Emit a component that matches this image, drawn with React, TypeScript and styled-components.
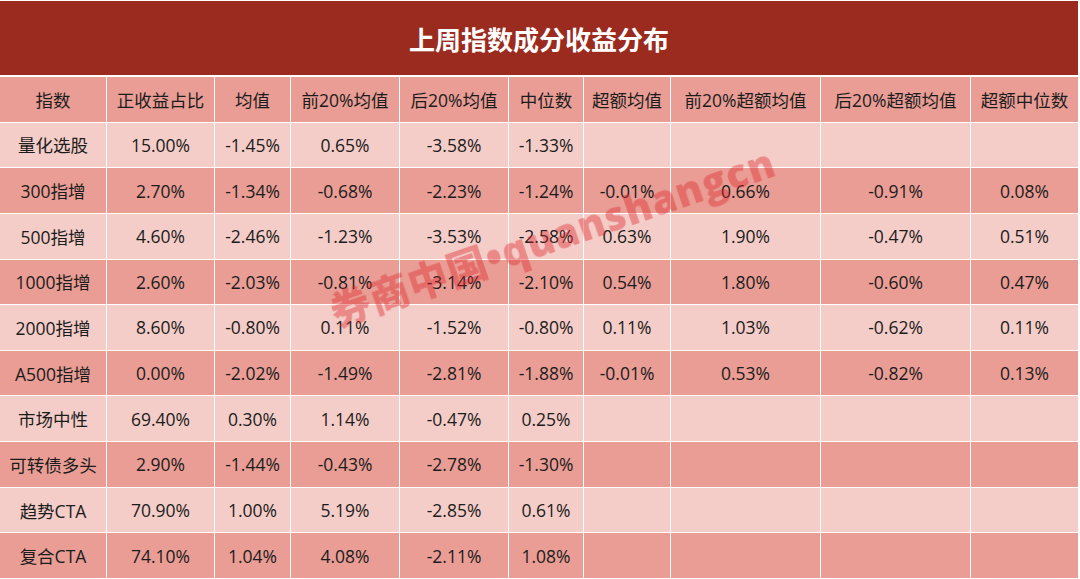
import React from "react";
import styled, { createGlobalStyle } from "styled-components";

const Global = createGlobalStyle`
  html, body { margin: 0; padding: 0; background: #fff; }
  body { font-family: "Open Sans", "Noto Sans CJK SC", sans-serif; }
`;

const Page = styled.div`
  position: relative;
  width: 1080px;
  height: 579px;
  background: #fff;
  overflow: hidden;
  padding-top: 1px;
  box-sizing: border-box;
`;

const TitleBar = styled.div`
  width: 1078px;
  height: 74px;
  background: #9b2b1f;
  color: #fff;
  display: flex;
  align-items: center;
  justify-content: center;
  font-family: "Noto Sans CJK SC", sans-serif;
  font-size: 26px;
  font-weight: 700;
`;

const Grid = styled.div`
  margin-top: 2px;
  width: 1078px;
  height: 501px;
  display: grid;
  grid-template-columns: 106px 107px 75px 108px 108px 74px 86px 149px 149px 107px;
  grid-auto-rows: 1fr;
  gap: 1px;
  background: #fff;
`;

const Cell = styled.div<{ $tone: "dark" | "light" }>`
  background: ${(p) => (p.$tone === "dark" ? "#e99d95" : "#f4cdc8")};
  display: flex;
  align-items: center;
  justify-content: center;
  font-size: 17.5px;
  color: #1c1c1c;
  white-space: nowrap;
`;

const Watermark = styled.div`
  position: absolute;
  left: 318px;
  top: 206px;
  transform: rotate(-19deg);
  transform-origin: center;
  font-family: "Open Sans", "Noto Sans CJK SC", sans-serif;
  font-size: 40px;
  font-weight: 800;
  letter-spacing: 1px;
  color: rgba(220, 35, 40, 0.4);
  white-space: nowrap;
  pointer-events: none;
  filter: blur(0.6px);
`;

const headers = [
  "指数",
  "正收益占比",
  "均值",
  "前20%均值",
  "后20%均值",
  "中位数",
  "超额均值",
  "前20%超额均值",
  "后20%超额均值",
  "超额中位数",
];

const rows: string[][] = [
  ["量化选股", "15.00%", "-1.45%", "0.65%", "-3.58%", "-1.33%", "", "", "", ""],
  ["300指增", "2.70%", "-1.34%", "-0.68%", "-2.23%", "-1.24%", "-0.01%", "0.66%", "-0.91%", "0.08%"],
  ["500指增", "4.60%", "-2.46%", "-1.23%", "-3.53%", "-2.58%", "0.63%", "1.90%", "-0.47%", "0.51%"],
  ["1000指增", "2.60%", "-2.03%", "-0.81%", "-3.14%", "-2.10%", "0.54%", "1.80%", "-0.60%", "0.47%"],
  ["2000指增", "8.60%", "-0.80%", "0.11%", "-1.52%", "-0.80%", "0.11%", "1.03%", "-0.62%", "0.11%"],
  ["A500指增", "0.00%", "-2.02%", "-1.49%", "-2.81%", "-1.88%", "-0.01%", "0.53%", "-0.82%", "0.13%"],
  ["市场中性", "69.40%", "0.30%", "1.14%", "-0.47%", "0.25%", "", "", "", ""],
  ["可转债多头", "2.90%", "-1.44%", "-0.43%", "-2.78%", "-1.30%", "", "", "", ""],
  ["趋势CTA", "70.90%", "1.00%", "5.19%", "-2.85%", "0.61%", "", "", "", ""],
  ["复合CTA", "74.10%", "1.04%", "4.08%", "-2.11%", "1.08%", "", "", "", ""],
];

export default function App() {
  return (
    <Page>
      <Global />
      <TitleBar>上周指数成分收益分布</TitleBar>
      <Grid>
        {headers.map((h, i) => (
          <Cell key={"h" + i} $tone="dark">
            {h}
          </Cell>
        ))}
        {rows.map((r, ri) =>
          r.map((c, ci) => (
            <Cell key={ri + "-" + ci} $tone={ri % 2 === 0 ? "light" : "dark"}>
              {c}
            </Cell>
          ))
        )}
      </Grid>
      <Watermark>券商中国•quanshangcn</Watermark>
    </Page>
  );
}
